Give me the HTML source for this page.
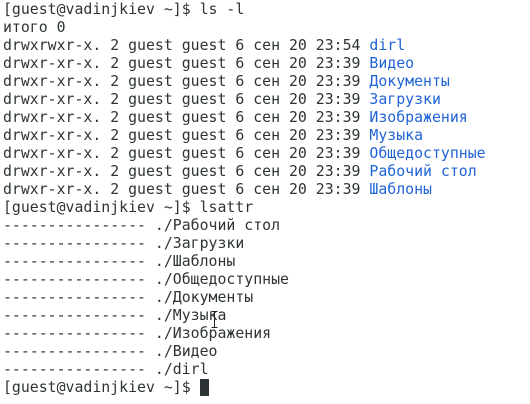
<!DOCTYPE html>
<html><head><meta charset="utf-8"><style>
html,body{margin:0;padding:0;background:#fff;width:530px;height:404px;overflow:hidden}
pre{margin:0;padding:0 0 0 3px;font-family:"DejaVu Sans Mono","Liberation Mono",monospace;font-size:14.85px;line-height:18px;color:#2e3436}
.b{color:#1f63d6}
.c{display:inline-block;width:9px;height:17px;background:#2e3436;vertical-align:-4px}
.ib{position:absolute;left:211px;top:311px;width:7px;height:17px}
</style></head><body><pre>[guest@vadinjkiev ~]$ ls -l
итого 0
drwxrwxr-x. 2 guest guest 6 сен 20 23:54 <span class="b">dirl</span>
drwxr-xr-x. 2 guest guest 6 сен 20 23:39 <span class="b">Видео</span>
drwxr-xr-x. 2 guest guest 6 сен 20 23:39 <span class="b">Документы</span>
drwxr-xr-x. 2 guest guest 6 сен 20 23:39 <span class="b">Загрузки</span>
drwxr-xr-x. 2 guest guest 6 сен 20 23:39 <span class="b">Изображения</span>
drwxr-xr-x. 2 guest guest 6 сен 20 23:39 <span class="b">Музыка</span>
drwxr-xr-x. 2 guest guest 6 сен 20 23:39 <span class="b">Общедоступные</span>
drwxr-xr-x. 2 guest guest 6 сен 20 23:39 <span class="b">Рабочий стол</span>
drwxr-xr-x. 2 guest guest 6 сен 20 23:39 <span class="b">Шаблоны</span>
[guest@vadinjkiev ~]$ lsattr
---------------- ./Рабочий стол
---------------- ./Загрузки
---------------- ./Шаблоны
---------------- ./Общедоступные
---------------- ./Документы
---------------- ./Музыка
---------------- ./Изображения
---------------- ./Видео
---------------- ./dirl
[guest@vadinjkiev ~]$ <span class="c"></span></pre>
<svg class="ib" viewBox="0 0 7 17"><path d="M0.5 0.5h6M0.5 16.5h6M3.5 0.5v16" stroke="#222" stroke-width="1" fill="none"/></svg>
</body></html>
